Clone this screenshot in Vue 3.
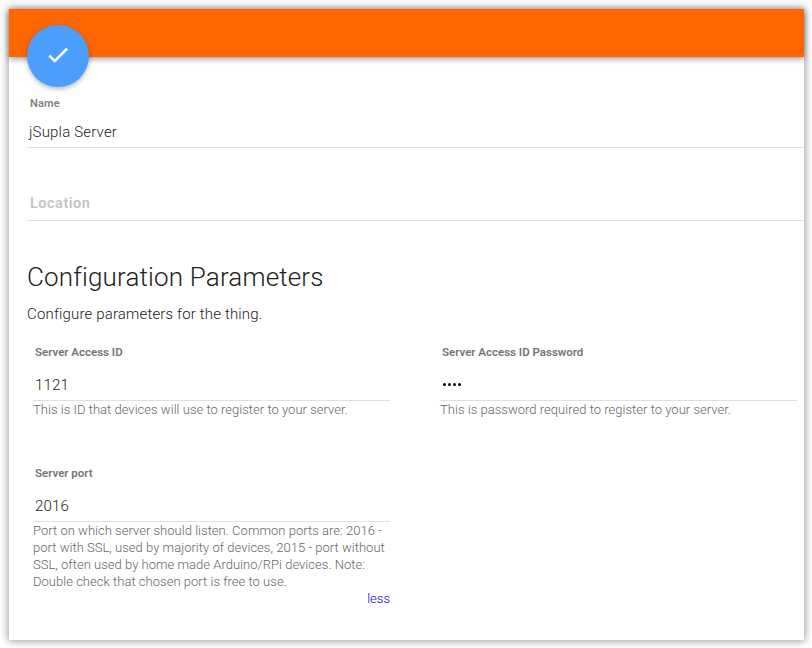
<template>
  <main class="panel">
    <header class="toolbar">
      <button class="fab" aria-label="Save">
        <svg viewBox="0 0 24 24" width="26" height="26"><path d="M9 16.17 4.83 12l-1.42 1.41L9 19 21 7l-1.41-1.41z" fill="#fff" stroke="#fff" stroke-width="0.5" /></svg>
      </button>
    </header>
    <section class="general">
      <div class="field name">
        <label>Name</label>
        <div class="value">jSupla Server</div>
      </div>
      <div class="field location">Location</div>
    </section>
    <section class="config">
      <h2>Configuration Parameters</h2>
      <p class="intro">Configure parameters for the thing.</p>
      <div class="grid">
        <div v-for="p in params" :key="p.label" class="param">
          <label>{{ p.label }}</label>
          <div v-if="p.secret" class="value dots"><i v-for="n in 4" :key="n"></i></div>
          <div v-else class="value">{{ p.value }}</div>
          <p class="hint"><span v-for="line in p.hint" :key="line">{{ line }}</span></p>
          <a v-if="p.more" class="less">less</a>
        </div>
      </div>
    </section>
  </main>
</template>

<script setup>
const params = [
  { label: 'Server Access ID', value: '1121', hint: ['This is ID that devices will use to register to your server.'] },
  { label: 'Server Access ID Password', secret: true, hint: ['This is password required to register to your server.'] },
  {
    label: 'Server port',
    value: '2016',
    more: true,
    hint: [
      'Port on which server should listen. Common ports are: 2016 -',
      'port with SSL, used by majority of devices, 2015 - port without',
      'SSL, often used by home made Arduino/RPi devices. Note:',
      'Double check that chosen port is free to use.',
    ],
  },
]
</script>

<style>
body { background: #fff; }
#app { display: flow-root; height: 648px; overflow: hidden; }
</style>
<style scoped>
* { box-sizing: border-box; }
.panel {
  width: 795px;
  height: 631px;
  margin: 9px 0 0 9px;
  background: #fff;
  box-shadow: 0 0 8px 1px rgba(0, 0, 0, 0.4);
  font-family: Roboto, sans-serif;
  font-weight: 300;
  color: #212121;
}
.toolbar {
  height: 48px;
  padding: 16px 0 0 18px;
  background: #ff6600;
  box-shadow: 0 2px 6px rgba(0, 0, 0, 0.4);
}
.fab {
  display: flex;
  align-items: center;
  justify-content: center;
  width: 62px;
  height: 62px;
  padding: 0 1px 2px 0;
  border: 0;
  border-radius: 50%;
  background: #4d9efc;
  box-shadow: 0 2px 5px rgba(0, 0, 0, 0.28);
}
.general { padding: 40px 0 0 18px; }
.field { border-bottom: 1px solid #e0e0e0; }
label {
  display: block;
  font-size: 11.5px;
  line-height: 14px;
  font-weight: 600;
  color: #757575;
}
.name { height: 51px; padding-left: 2px; }
.name label { padding-left: 1px; font-size: 11px; letter-spacing: 0.2px; color: #828282; }
.name .value { margin-top: 11px; font-size: 15px; line-height: 20px; letter-spacing: 0.18px; }
.location {
  height: 73px;
  padding: 46px 0 0 3px;
  font-size: 14.5px;
  line-height: 20px;
  font-weight: 600;
  letter-spacing: 0.5px;
  color: #c4c4c4;
}
.config { padding: 39px 7px 0 18px; }
h2 { margin: 0; font-size: 26px; line-height: 34px; font-weight: 300; letter-spacing: 0.16px; }
.intro { margin: 10px 0 0; font-size: 15px; line-height: 20px; letter-spacing: 0.16px; }
.grid {
  display: grid;
  grid-template-columns: 357px 357px;
  grid-template-rows: 121px auto;
  column-gap: 50px;
  padding: 21px 0 0 6px;
}
.param label { padding-left: 2px; }
.param .value {
  height: 42px;
  padding: 16px 0 0 2px;
  border-bottom: 1px solid #e0e0e0;
  font-size: 15px;
  line-height: 20px;
  letter-spacing: 0.18px;
}
.param .dots { display: flex; gap: 2px; padding-left: 2.5px; }
.dots i { width: 3px; height: 3px; margin-top: 8px; border-radius: 50%; background: #000; }
.hint { margin: 0; font-size: 13px; line-height: 17px; letter-spacing: 0.025px; color: #666; }
.hint span { display: block; white-space: nowrap; }
.less { display: block; text-align: right; font-size: 13px; line-height: 17px; color: #0000ee; }
</style>
